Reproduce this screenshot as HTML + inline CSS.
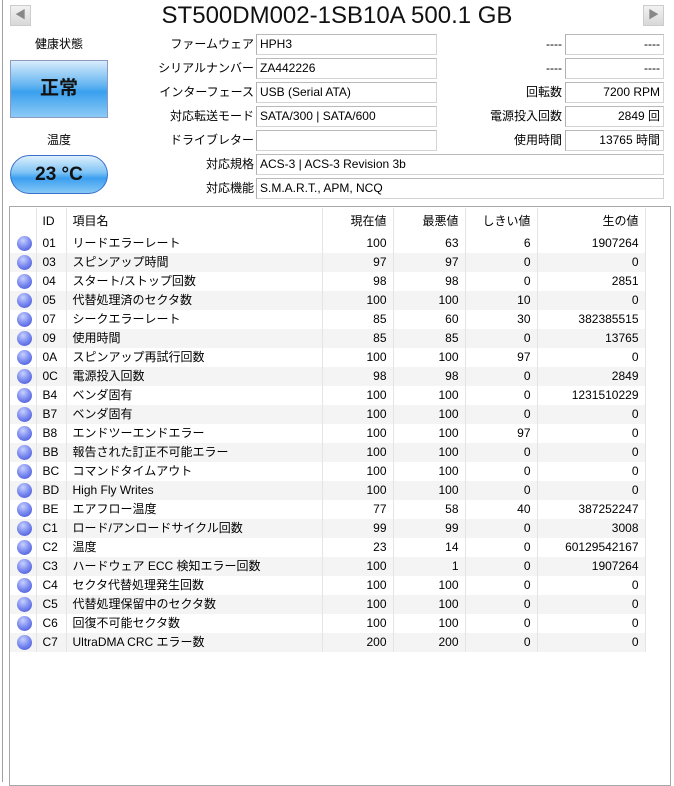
<!DOCTYPE html>
<html><head><meta charset="utf-8"><style>
*{margin:0;padding:0;box-sizing:border-box}
body{width:674px;height:782px;background:#fff;position:relative;overflow:hidden;font-family:"Liberation Sans","Noto Sans CJK JP",sans-serif;font-size:12px;color:#000}
.a{position:absolute}
.lbl{position:absolute;text-align:right;white-space:nowrap;line-height:20px}
.fld{position:absolute;height:21px;border:1px solid #d4d4d4;border-left:1px solid #b0b0b0;border-top:1px solid #b9b9b9;line-height:19px;padding:0 3px;white-space:nowrap;background:#fff}
.btn{position:absolute;width:21px;height:21px;background:linear-gradient(#f2f2f2,#d8d8d8);border:1px solid #ccc;color:#888;font-size:11px;text-align:center;line-height:19px}
table{border-collapse:collapse;position:absolute;left:10px;top:208px;width:635px;table-layout:fixed}
td{height:19px;line-height:19px;padding:0 6px;white-space:nowrap;border-right:1px solid #e4e4e4}
tr.h td{height:26px;line-height:24px}
tr.g td{background:#f4f4f4}
.r{text-align:right}
.dot{display:inline-block;width:15px;height:15px;border-radius:50%;background:radial-gradient(circle at 40% 30%,#c8d0ff 0,#8090f0 45%,#3a48d8 100%);vertical-align:middle;margin-left:1px}
</style></head><body>
<div class="a" style="left:2px;top:0;width:1px;height:782px;background:#a0a0a0"></div>
<div class="btn" style="left:10px;top:5px">◀</div>
<div class="btn" style="left:643px;top:5px">▶</div>
<div class="a" style="left:0;width:674px;top:2px;text-align:center;font-size:24px;line-height:28px;color:#111">ST500DM002-1SB10A 500.1 GB</div>

<div class="a" style="left:10px;width:98px;top:35px;text-align:center;line-height:18px">健康状態</div>
<div class="a" style="left:10px;top:60px;width:98px;height:58px;border:1px solid #8a9ac0;background:linear-gradient(#d8ecfc 0%,#5fb2f0 45%,#3aa0ee 55%,#8ccaf6 100%);text-align:center;line-height:56px;font-size:19px;font-weight:bold;color:#111">正常</div>
<div class="a" style="left:10px;width:98px;top:131px;text-align:center;line-height:18px">温度</div>
<div class="a" style="left:10px;top:155px;width:98px;height:39px;border:1px solid #3a70c8;border-radius:20px;background:linear-gradient(#dff0fd 0%,#7cc2f4 45%,#3b9ff0 60%,#86c8f6 100%);text-align:center;line-height:37px;font-size:19px;font-weight:bold;color:#111">23 °C</div>

<div class="lbl" style="right:420px;top:34px">ファームウェア</div><div class="fld" style="left:256px;top:34px;width:181px">HPH3</div>
<div class="lbl" style="right:420px;top:58px">シリアルナンバー</div><div class="fld" style="left:256px;top:58px;width:181px">ZA442226</div>
<div class="lbl" style="right:420px;top:82px">インターフェース</div><div class="fld" style="left:256px;top:82px;width:181px">USB (Serial ATA)</div>
<div class="lbl" style="right:420px;top:106px">対応転送モード</div><div class="fld" style="left:256px;top:106px;width:181px">SATA/300 | SATA/600</div>
<div class="lbl" style="right:420px;top:130px">ドライブレター</div><div class="fld" style="left:256px;top:130px;width:181px"></div>
<div class="lbl" style="right:420px;top:154px">対応規格</div><div class="fld" style="left:256px;top:154px;width:408px">ACS-3 | ACS-3 Revision 3b</div>
<div class="lbl" style="right:420px;top:178px">対応機能</div><div class="fld" style="left:256px;top:178px;width:408px">S.M.A.R.T., APM, NCQ</div>

<div class="lbl" style="right:112px;top:34px">----</div><div class="fld r" style="left:565px;top:34px;width:99px">----</div>
<div class="lbl" style="right:112px;top:58px">----</div><div class="fld r" style="left:565px;top:58px;width:99px">----</div>
<div class="lbl" style="right:112px;top:82px">回転数</div><div class="fld r" style="left:565px;top:82px;width:99px">7200 RPM</div>
<div class="lbl" style="right:112px;top:106px">電源投入回数</div><div class="fld r" style="left:565px;top:106px;width:99px">2849 回</div>
<div class="lbl" style="right:112px;top:130px">使用時間</div><div class="fld r" style="left:565px;top:130px;width:99px">13765 時間</div>

<div class="a" style="left:9px;top:206px;width:662px;height:580px;border:1px solid #a8a8a8"></div>
<table>
<colgroup><col style="width:26px"><col style="width:30px"><col style="width:256px"><col style="width:71px"><col style="width:72px"><col style="width:72px"><col style="width:108px"></colgroup>
<tr class="h"><td></td><td>ID</td><td>項目名</td><td class="r">現在値</td><td class="r">最悪値</td><td class="r">しきい値</td><td class="r">生の値</td></tr>
<tr><td><span class="dot"></span></td><td>01</td><td>リードエラーレート</td><td class="r">100</td><td class="r">63</td><td class="r">6</td><td class="r">1907264</td></tr>
<tr class="g"><td><span class="dot"></span></td><td>03</td><td>スピンアップ時間</td><td class="r">97</td><td class="r">97</td><td class="r">0</td><td class="r">0</td></tr>
<tr><td><span class="dot"></span></td><td>04</td><td>スタート/ストップ回数</td><td class="r">98</td><td class="r">98</td><td class="r">0</td><td class="r">2851</td></tr>
<tr class="g"><td><span class="dot"></span></td><td>05</td><td>代替処理済のセクタ数</td><td class="r">100</td><td class="r">100</td><td class="r">10</td><td class="r">0</td></tr>
<tr><td><span class="dot"></span></td><td>07</td><td>シークエラーレート</td><td class="r">85</td><td class="r">60</td><td class="r">30</td><td class="r">382385515</td></tr>
<tr class="g"><td><span class="dot"></span></td><td>09</td><td>使用時間</td><td class="r">85</td><td class="r">85</td><td class="r">0</td><td class="r">13765</td></tr>
<tr><td><span class="dot"></span></td><td>0A</td><td>スピンアップ再試行回数</td><td class="r">100</td><td class="r">100</td><td class="r">97</td><td class="r">0</td></tr>
<tr class="g"><td><span class="dot"></span></td><td>0C</td><td>電源投入回数</td><td class="r">98</td><td class="r">98</td><td class="r">0</td><td class="r">2849</td></tr>
<tr><td><span class="dot"></span></td><td>B4</td><td>ベンダ固有</td><td class="r">100</td><td class="r">100</td><td class="r">0</td><td class="r">1231510229</td></tr>
<tr class="g"><td><span class="dot"></span></td><td>B7</td><td>ベンダ固有</td><td class="r">100</td><td class="r">100</td><td class="r">0</td><td class="r">0</td></tr>
<tr><td><span class="dot"></span></td><td>B8</td><td>エンドツーエンドエラー</td><td class="r">100</td><td class="r">100</td><td class="r">97</td><td class="r">0</td></tr>
<tr class="g"><td><span class="dot"></span></td><td>BB</td><td>報告された訂正不可能エラー</td><td class="r">100</td><td class="r">100</td><td class="r">0</td><td class="r">0</td></tr>
<tr><td><span class="dot"></span></td><td>BC</td><td>コマンドタイムアウト</td><td class="r">100</td><td class="r">100</td><td class="r">0</td><td class="r">0</td></tr>
<tr class="g"><td><span class="dot"></span></td><td>BD</td><td>High Fly Writes</td><td class="r">100</td><td class="r">100</td><td class="r">0</td><td class="r">0</td></tr>
<tr><td><span class="dot"></span></td><td>BE</td><td>エアフロー温度</td><td class="r">77</td><td class="r">58</td><td class="r">40</td><td class="r">387252247</td></tr>
<tr class="g"><td><span class="dot"></span></td><td>C1</td><td>ロード/アンロードサイクル回数</td><td class="r">99</td><td class="r">99</td><td class="r">0</td><td class="r">3008</td></tr>
<tr><td><span class="dot"></span></td><td>C2</td><td>温度</td><td class="r">23</td><td class="r">14</td><td class="r">0</td><td class="r">60129542167</td></tr>
<tr class="g"><td><span class="dot"></span></td><td>C3</td><td>ハードウェア ECC 検知エラー回数</td><td class="r">100</td><td class="r">1</td><td class="r">0</td><td class="r">1907264</td></tr>
<tr><td><span class="dot"></span></td><td>C4</td><td>セクタ代替処理発生回数</td><td class="r">100</td><td class="r">100</td><td class="r">0</td><td class="r">0</td></tr>
<tr class="g"><td><span class="dot"></span></td><td>C5</td><td>代替処理保留中のセクタ数</td><td class="r">100</td><td class="r">100</td><td class="r">0</td><td class="r">0</td></tr>
<tr><td><span class="dot"></span></td><td>C6</td><td>回復不可能セクタ数</td><td class="r">100</td><td class="r">100</td><td class="r">0</td><td class="r">0</td></tr>
<tr class="g"><td><span class="dot"></span></td><td>C7</td><td>UltraDMA CRC エラー数</td><td class="r">200</td><td class="r">200</td><td class="r">0</td><td class="r">0</td></tr>
</table>
</body></html>
